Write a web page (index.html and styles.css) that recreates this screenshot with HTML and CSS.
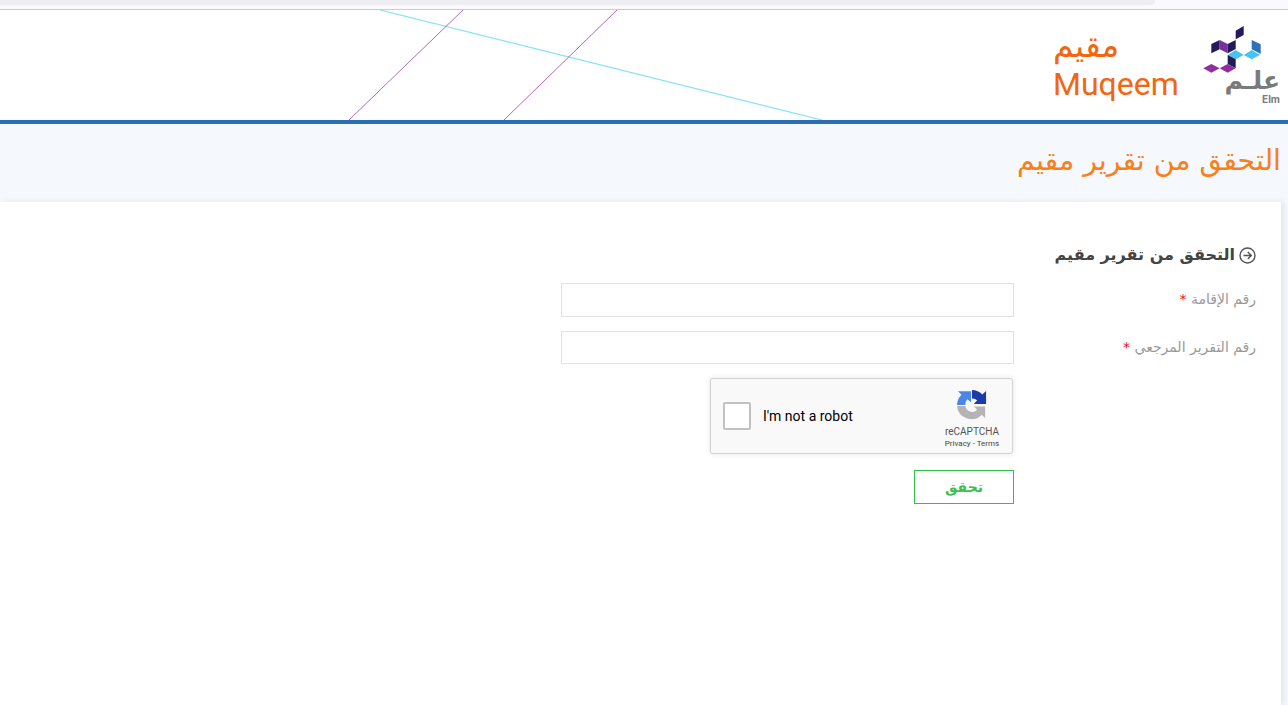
FILE: index.html
```html
<!DOCTYPE html>
<html lang="ar" dir="rtl">
<head>
    <meta charset="UTF-8">
    <title>التحقق من تقرير مقيم</title>
    <link rel="stylesheet" href="styles.css">
</head>

<body>
    <!-- browser strip at the very top -->
    <div class="top-strip"><div class="top-strip-bar"></div></div>

    <!-- header with logos -->
    <div class="header">
        <svg class="header-lines" width="1288" height="110" viewBox="0 10 1288 110">
            <line x1="380" y1="10" x2="822" y2="120" stroke="#86e2f6" stroke-width="1.2"/>
            <line x1="463" y1="10" x2="349" y2="120" stroke="#b565bb" stroke-width="1"/>
            <line x1="617" y1="10" x2="504" y2="120" stroke="#b565bb" stroke-width="1"/>
        </svg>
        <div class="elm-logo">
            <svg class="elm-cubes" width="58" height="48" viewBox="1203 26 58 48">
                <polygon fill="#231a5e" points="1235.7,30.7 1243.7,26 1243.7,35 1235.7,39.3"/>
                <polygon fill="#231a5e" points="1211.3,44 1219.7,40 1219.7,49.3 1211.3,53.3"/>
                <polygon fill="#7b2f9e" points="1219.7,40 1227.7,44 1227.7,53.3 1219.7,49.3"/>
                <polygon fill="#231a5e" points="1227.7,44 1235.7,40 1235.7,49 1227.7,53.3"/>
                <polygon fill="#45c4f0" points="1227.7,55 1235.7,50 1243.7,55 1235.7,59.3"/>
                <polygon fill="#45c4f0" points="1243.7,55 1251.7,50 1260,55 1251.7,59.3"/>
                <polygon fill="#2b72bd" points="1251.7,40 1260.7,44.3 1260.7,54 1251.7,49.3"/>
                <polygon fill="#231a5e" points="1227.7,55 1235.7,59.3 1235.7,68.3 1227.7,64"/>
                <polygon fill="#8e2f9f" points="1203.3,68.3 1211.3,64 1219.7,68.3 1211.3,72.7"/>
                <polygon fill="#8e2f9f" points="1219.7,68.3 1227.7,64 1235.7,68.3 1227.7,72.7"/>
            </svg>
            <div class="elm-ar">علـم</div>
            <div class="elm-en">Elm</div>
        </div>
        <div class="muqeem-logo">
            <div class="muqeem-ar">مقيم</div>
            <div class="muqeem-en">Muqeem</div>
        </div>
    </div>

    <div class="title-band">
        <h1>التحقق من تقرير مقيم</h1>
    </div>

    <div class="card">
        <h2 class="form-title">
            <svg width="17" height="17" viewBox="0 0 17 17">
                <circle cx="8.5" cy="8.5" r="7.5" fill="none" stroke="#555" stroke-width="1.4"/>
                <path d="M4.5 8.5H12M8.8 5L12.3 8.5L8.8 12" fill="none" stroke="#555" stroke-width="1.4"/>
            </svg>
            التحقق من تقرير مقيم
        </h2>

        <div class="form-row">
            <label>رقم الإقامة <span class="required">*</span></label>
            <input type="text">
        </div>
        <div class="form-row form-row-short">
            <label>رقم التقرير المرجعي <span class="required">*</span></label>
            <input type="text">
        </div>

        <div class="form-row form-row-captcha">
            <div class="label-space"></div>
            <div class="captcha" dir="ltr">
                <div class="captcha-check"></div>
                <div class="captcha-text">I'm not a robot</div>
                <div class="captcha-brand">
                    <svg width="30" height="30" viewBox="0 0 32 32">
                        <path fill="#b4b4b4" d="M0 17H9A7.2 7.2 0 0 0 21.5 21L18 17.5H30V30L26.5 26.5A15.5 15.5 0 0 1 0 17Z"/>
                        <path fill="#4a86e8" d="M0 16A15.5 15.5 0 0 1 4.8 5L1 1.2H15V13L11 9.8A7.2 7.2 0 0 0 9 16Z"/>
                        <path fill="#1c3aa9" d="M16 0A15.5 15.5 0 0 1 27 4.8L31 1V15H18L21.5 11A7.2 7.2 0 0 0 16 9Z"/>
                    </svg>
                    <div class="captcha-name">reCAPTCHA</div>
                    <div class="captcha-links">Privacy - Terms</div>
                </div>
            </div>
        </div>

        <div class="form-row">
            <div class="label-space"></div>
            <button class="verify-button">تحقق</button>
        </div>
    </div>
</body>
</html>
```

FILE: styles.css
```css
body {
    margin: 0;
    font-family: "DejaVu Sans", "Noto Sans", sans-serif;
    background-color: #F5F8FD;
    height: 705px;
    overflow: hidden;
}
/* top strip */
.top-strip {
    height: 9px;
    background-color: #FAFAFC;
    border-bottom: 1px solid #CCCCCC;
}
.top-strip-bar {
    width: 1155px;
    height: 5px;
    margin-right: 133px;
    background-color: #EEEEF2;
    border-bottom-right-radius: 4px;
}
/* header */
.header {
    position: relative;
    height: 110px;
    background-color: #FFFFFF;
    border-bottom: 4px solid #2A6EB6;
    display: flex;
    align-items: flex-start;
    padding-right: 8px;
    gap: 24px;
}
.header-lines {
    position: absolute;
    left: 0;
    top: 0;
}
.elm-logo {
    width: 77px;
    padding-top: 16px;
    text-align: right;
    color: #7A7A7C;
}
.elm-cubes {
    display: block;
    margin-right: auto;
}
.elm-ar {
    font-size: 25px;
    font-weight: bold;
    line-height: 18px;
    margin-top: -2px;
}
.elm-en {
    font-size: 10px;
    font-weight: bold;
    line-height: 10px;
    margin-top: 4px;
    font-family: "Inter", sans-serif;
}
.muqeem-logo {
    color: #F4650F;
    width: 126px;
}
.muqeem-ar {
    font-size: 33px;
    line-height: 36px;
    margin-top: 18px;
    text-align: left;
}
.muqeem-en {
    font-size: 32px;
    line-height: 36px;
    margin-top: 2px;
    font-family: Roboto, sans-serif;
    direction: ltr;
    text-align: left;
}
/* title */
.title-band {
    height: 78px;
    box-sizing: border-box;
    display: flex;
    align-items: center;
    padding: 0 7px 6px 0;
}
.title-band h1 {
    margin: 0;
    font-size: 28.4px;
    font-weight: normal;
    color: #FA7F1A;
}
/* form card */
.card {
    margin-right: 7px;
    height: 503px;
    box-sizing: border-box;
    padding: 38px 25px 0 0;
    background-color: #FFFFFF;
    box-shadow: 3px 0 6px rgba(0,0,0,0.08);
}
.form-title {
    margin: 0 0 13px;
    height: 30px;
    font-size: 16px;
    line-height: 30px;
    font-weight: bold;
    color: #444444;
    display: flex;
    align-items: center;
    gap: 4px;
}
.form-row {
    display: flex;
    align-items: flex-start;
    margin-bottom: 14px;
}
.form-row-captcha {
    margin-bottom: 16px;
}
.form-row label {
    display: block;
    width: 242px;
    font-size: 14px;
    line-height: 33px;
    color: #999999;
}
.required {
    color: #E8112D;
}
.label-space {
    width: 242px;
}
.form-row input {
    width: 453px;
    height: 34px;
    box-sizing: border-box;
    border: 1px solid #E2E2E2;
    background-color: #FFFFFF;
    padding: 0 10px;
}
.form-row-short input {
    height: 33px;
}
/* captcha widget */
.captcha {
    width: 303px;
    height: 76px;
    margin-right: 1px;
    box-sizing: border-box;
    display: flex;
    align-items: center;
    border: 1px solid #D3D3D3;
    border-radius: 3px;
    background-color: #F9F9F9;
    box-shadow: 0 0 4px 1px rgba(0,0,0,0.08);
    font-family: Roboto, sans-serif;
}
.captcha-check {
    width: 28px;
    height: 28px;
    box-sizing: border-box;
    margin-left: 12px;
    border: 2px solid #C1C1C1;
    border-radius: 2px;
    background-color: #FFFFFF;
}
.captcha-text {
    margin-left: 12px;
    font-size: 14px;
    color: #000000;
    flex: 1;
}
.captcha-brand {
    width: 70px;
    margin-right: 5px;
    text-align: center;
    color: #555555;
    padding-top: 6px;
}
.captcha-brand svg {
    display: block;
    margin: 0 auto 5px;
}
.captcha-name {
    font-size: 10px;
    line-height: 13px;
}
.captcha-links {
    font-size: 8px;
    line-height: 11px;
    color: #444444;
}
.verify-button {
    width: 100px;
    height: 34px;
    padding: 0;
    border: 1px solid #33C04A;
    background-color: #FFFFFF;
    color: #3CC04F;
    font-family: "DejaVu Sans", sans-serif;
    font-size: 14px;
    font-weight: bold;
}
```
